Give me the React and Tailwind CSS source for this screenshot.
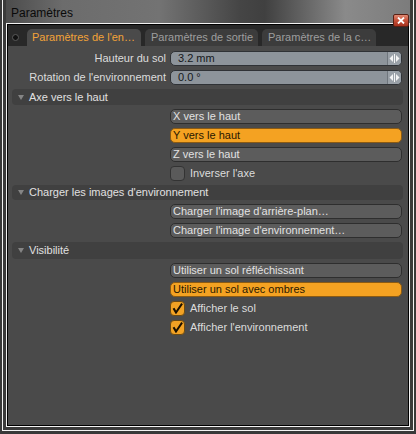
import React from "react";

function Input({ value }) {
  return (
    <div className="flex h-[15px] w-[232px] items-stretch overflow-hidden rounded-[5px] border border-[#2f3236] bg-[#8d949b]">
      <div className="flex-1 pl-[7px] text-[11px] leading-[13px] text-[#15181c]">{value}</div>
      <div className="flex w-[14px] items-center justify-center gap-[1px] border-l border-[#6f767d] bg-[#9aa1a8]">
        <svg width="11" height="9" viewBox="0 0 11 9">
          <polygon points="4,1 4,8 0.5,4.5" fill="#f4f4f4" />
          <rect x="5" y="0" width="1" height="9" fill="#f4f4f4" />
          <polygon points="7,1 7,8 10.5,4.5" fill="#f4f4f4" />
        </svg>
      </div>
    </div>
  );
}

function Row({ label, children }) {
  return (
    <div className="flex h-[15px] items-center">
      <div className="w-[162px] pr-[4px] text-right text-[11px] leading-[15px] text-[#dcdcdc]">{label}</div>
      {children}
    </div>
  );
}

function Button({ label, active }) {
  return (
    <div className="flex h-[15px] items-center">
      <div className="w-[162px]" />
      <div
        className={
          active
            ? "h-[15px] w-[232px] rounded-[5px] border border-[#8a5a14] bg-[#f4a222] pl-[2px] text-[11px] leading-[13px] text-[#2a1800]"
            : "h-[15px] w-[232px] rounded-[5px] border border-[#2e2e2e] bg-[#5c5c5c] pl-[2px] text-[11px] leading-[13px] text-[#e2e2e2]"
        }
      >
        {label}
      </div>
    </div>
  );
}

function Check({ label, checked }) {
  return (
    <div className="flex h-[15px] items-center">
      <div className="w-[162px]" />
      <div
        className={
          checked
            ? "flex h-[15px] w-[15px] items-center justify-center rounded-[4px] border border-[#6a4a14] bg-[#f2a224]"
            : "h-[15px] w-[15px] rounded-[4px] border border-[#333333] bg-[#5a5a5a]"
        }
      >
        {checked && (
          <svg width="11" height="11" viewBox="0 0 11 11">
            <path d="M2 6 L4 9.5 L9.5 1.5" stroke="#1a1000" strokeWidth="2" fill="none" strokeLinecap="square" />
          </svg>
        )}
      </div>
      <div className="pl-[5px] text-[11px] leading-[15px] text-[#dcdcdc]">{label}</div>
    </div>
  );
}

function Header({ label, h }) {
  return (
    <div className={"ml-[4px] mr-[5px] flex items-center rounded-[4px] bg-[#404040] " + h}>
      <svg width="17" height="15" viewBox="0 0 17 15">
        <polygon points="6,5 12,5 9,10" fill="#858585" />
      </svg>
      <div className="text-[11px] leading-[15px] text-[#e0e0e0]">{label}</div>
    </div>
  );
}

export default function App() {
  return (
    <div className="relative h-[434px] w-[416px] bg-[#383838] px-[2px] pb-[3px] font-[Liberation_Sans,Arial,sans-serif]">
      <div className="flex h-full flex-col border-x border-b border-[#f2f2f2] bg-[#3a3a3a] px-[3px] pb-[3px]">
        <div className="h-[23px] shrink-0 bg-[linear-gradient(90deg,#4c4c4c_0%,#6c6c6c_14%,#737373_38%,#454545_58%,#404040_64%,#8a8a8a_84%,#7c7c7c_100%)] pl-[5px] pt-[6px] text-[12px] leading-[14px] text-[#0a0a0a]">
          Paramètres
        </div>
        <div className="flex flex-1 flex-col border border-[#f2f2f2]">
          <div className="flex flex-1 flex-col border border-[#000000] bg-[#4a4a4a]">
            <div className="flex h-[21px] shrink-0 items-end bg-[#282828]">
              <div className="mb-[5px] ml-[4px] h-[7px] w-[7px] rounded-full border border-[#5a5a5a] bg-[#111111]" />
              <div className="ml-[8px] flex items-end gap-[4px]">
                <div className="h-[17px] w-[114px] rounded-t-[5px] bg-[#4a4a4a] pl-[5px] text-[11px] leading-[17px] text-[#f3a338]">
                  Paramètres de l'en…
                </div>
                <div className="h-[17px] w-[113px] rounded-t-[5px] bg-[#3c3c3c] pl-[6px] text-[11px] leading-[17px] text-[#9e9e9e]">
                  Paramètres de sortie
                </div>
                <div className="h-[17px] w-[114px] rounded-t-[5px] bg-[#3c3c3c] pl-[6px] text-[11px] leading-[17px] text-[#9e9e9e]">
                  Paramètres de la c…
                </div>
              </div>
            </div>
            <div className="flex flex-col gap-[4px] pt-[5px]">
              <Row label="Hauteur du sol">
                <Input value="3.2 mm" />
              </Row>
              <Row label="Rotation de l'environnement">
                <Input value="0.0 °" />
              </Row>
              <Header label="Axe vers le haut" h="h-[16px]" />
              <Button label="X vers le haut" />
              <Button label="Y vers le haut" active />
              <Button label="Z vers le haut" />
              <Check label="Inverser l'axe" />
              <Header label="Charger les images d'environnement" h="h-[15px]" />
              <Button label="Charger l'image d'arrière-plan…" />
              <Button label="Charger l'image d'environnement…" />
              <Header label="Visibilité" h="h-[17px]" />
              <Button label="Utiliser un sol réfléchissant" />
              <Button label="Utiliser un sol avec ombres" active />
              <Check label="Afficher le sol" checked />
              <Check label="Afficher l'environnement" checked />
            </div>
          </div>
        </div>
      </div>
      <div className="absolute left-[393px] top-[14px] flex h-[13px] w-[16px] items-center justify-center rounded-[2px] border border-[#5a2014] bg-[linear-gradient(180deg,#e08a74_0%,#c8543c_45%,#a8321e_100%)]">
        <svg width="8" height="7" viewBox="0 0 8 7">
          <path d="M1 0.5 L7 6.5 M7 0.5 L1 6.5" stroke="#ffffff" strokeWidth="1.8" />
        </svg>
      </div>
    </div>
  );
}
